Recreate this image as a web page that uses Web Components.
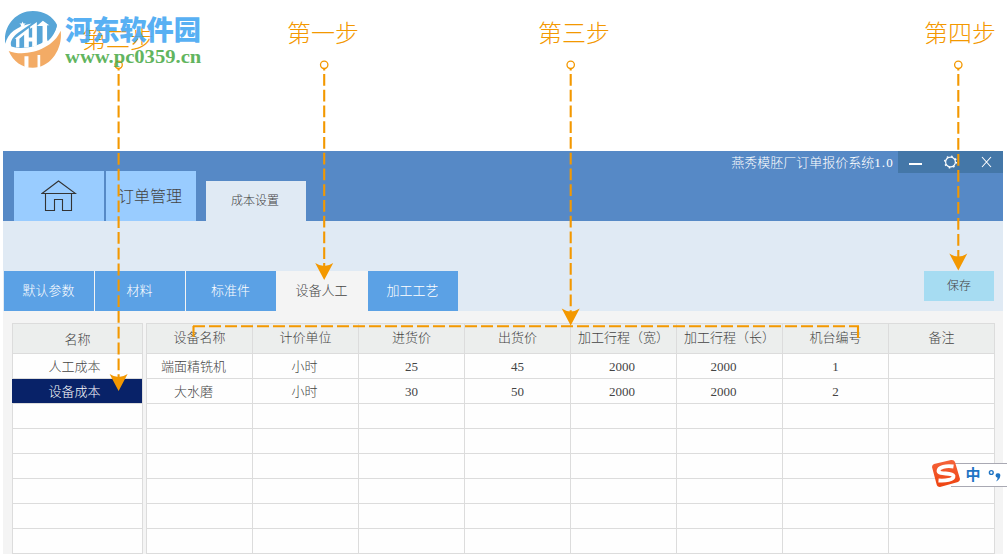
<!DOCTYPE html>
<html lang="zh-CN">
<head>
<meta charset="UTF-8">
<title>燕秀模胚厂订单报价系统</title>
<style>
    html, body {
        margin: 0;
        height: 100%;
        overflow: hidden;
        background: #fff;
    }
    body {
        font-family: "Liberation Serif", "Noto Sans CJK SC", serif;
        font-weight: 300;
        font-size: 13px;
        color: #444;
    }
</style>
</head>
<body>
<guide-page></guide-page>

<script>
class StepLabel extends HTMLElement {

    constructor() {
        super()
        this.shadow = this.attachShadow({ mode: 'open' })
    }

    connectedCallback() {
        this.shadow.innerHTML =
      /*html*/`
        <style>
            :host {
                display: block;
                width: 72px;
                font-size: 24px;
                line-height: 32px;
                color: #f39800;
                white-space: nowrap;
                text-align: center;
            }
        </style>
        <slot></slot>
      `
    }
}

class SiteLogo extends HTMLElement {

    constructor() {
        super()
        this.shadow = this.attachShadow({ mode: 'open' })
    }

    connectedCallback() {
        this.shadow.innerHTML =
      /*html*/`
        <style>
            :host {
                display: flex;
                align-items: flex-start;
                gap: 4px;
                opacity: 0.88;
            }
            svg {
                width: 57px;
                height: 57px;
                margin-top: 1px;
            }
            .name {
                font-family: "Noto Sans CJK SC", sans-serif;
                font-weight: 900;
                font-size: 27.2px;
                line-height: 32px;
                padding-top: 2px;
                color: #42a6f2;
                white-space: nowrap;
            }
            .url {
                font-family: "Liberation Serif", serif;
                font-weight: bold;
                font-size: 19px;
                line-height: 20px;
                padding-top: 3px;
                color: #4cab49;
                white-space: nowrap;
            }
            .url span {
                display: inline-block;
                transform-origin: 0 50%;
                transform: scaleX(1.085);
            }
        </style>
        <svg viewBox="14 33 170 170">
            <path d="M18 131C10 80 48 33 100 33C134 33 160 50 172 74C170 104 130 136 84 142C62 145 46 143 36 139C30 126 40 110 56 98L96 70C52 78 24 100 18 131Z" fill="#4099d2"/>
            <path d="M46 116L88 84V112H98V82L92 86V80L112 66V136L98 140V124H88V142H74V104L60 116V142H50V116Z" fill="#fff"/>
            <path d="M112 78L130 62L150 76H143V124L129 132V78Z" fill="#fff"/>
            <path d="M150 76C158 72 166 72 171 77C168 96 158 110 146 122L143 122V76Z" fill="#4099d2"/>
            <path d="M183 92C190 146 152 202 100 202C68 202 42 184 28 152C76 172 160 148 183 92Z" fill="#f2a050"/>
            <path d="M75 202V168H87V202ZM114 202V164H122V202Z" fill="#fff"/>
            <path d="M69 64L72 70L79 70L74 75L76 82L69 78L63 82L65 75L60 70L67 70Z" fill="#fff"/>
        </svg>
        <div>
            <div class="name">河东软件园</div>
            <div class="url"><span>www.pc0359.cn</span></div>
        </div>
      `
    }
}

class WindowControls extends HTMLElement {

    constructor() {
        super()
        this.shadow = this.attachShadow({ mode: 'open' })
    }

    connectedCallback() {
        this.shadow.innerHTML =
      /*html*/`
        <style>
            :host {
                display: flex;
                width: 105px;
                height: 22px;
                background: #4477a8;
            }
            svg {
                width: 35px;
                height: 22px;
                fill: none;
                stroke: #fff;
            }
        </style>
        <svg><path d="M11 13H24" stroke-width="2"/></svg>
        <svg>
            <circle cx="17.5" cy="11" r="4.9" stroke-width="1.2"/>
            <circle cx="17.5" cy="11" r="5.8" stroke-width="1.5" stroke-dasharray="1.6 2.955"/>
        </svg>
        <svg><path d="M14 6L23 16M23 6L14 16" stroke-width="1.1"/></svg>
      `
    }
}

class AppHeader extends HTMLElement {

    constructor() {
        super()
        this.shadow = this.attachShadow({ mode: 'open' })
    }

    connectedCallback() {
        this.shadow.innerHTML =
      /*html*/`
        <style>
            :host {
                display: flex;
                justify-content: space-between;
                height: 70px;
                background: #5689c6;
            }
            .tabs {
                display: flex;
                align-items: flex-end;
                padding-left: 11px;
            }
            .tab {
                box-sizing: border-box;
                display: flex;
                align-items: center;
                justify-content: center;
                width: 90px;
                height: 50px;
                margin-right: 2px;
                background: #99ccff;
                font-size: 16px;
            }
            .text {
                padding: 0 2px 2px 0;
            }
            .tab.current {
                width: 100px;
                height: 40px;
                margin-left: 8px;
                background: #e0eaf4;
                font-size: 12px;
            }
            .right {
                display: flex;
                align-items: flex-start;
                gap: 4px;
            }
            .title {
                line-height: 24px;
                color: #fff;
            }
            .num {
                letter-spacing: 1.2px;
            }
            svg {
                width: 36px;
                height: 32px;
                fill: none;
                stroke: #333;
                stroke-width: 1.1;
            }
        </style>
        <div class="tabs">
            <div class="tab">
                <svg><path d="M1 13.500L17.500 1L34.500 13.500ZM4.500 13.500V30.500H13.500V19.500H21.500V30.500H30.500V13.500"/></svg>
            </div>
            <div class="tab text">订单管理</div>
            <div class="tab text current">成本设置</div>
        </div>
        <div class="right">
            <div class="title">燕秀模胚厂订单报价系统<span class="num">1.0</span></div>
            <window-controls></window-controls>
        </div>
      `
    }
}

class AppToolbar extends HTMLElement {

    constructor() {
        super()
        this.shadow = this.attachShadow({ mode: 'open' })
    }

    connectedCallback() {
        this.shadow.innerHTML =
      /*html*/`
        <style>
            :host {
                display: flex;
                justify-content: space-between;
                height: 40px;
                padding: 50px 9px 0 1px;
                background: #e0eaf4;
            }
            .tabs {
                display: flex;
                gap: 1px;
                background: #f4f4f4;
            }
            .tab {
                box-sizing: border-box;
                width: 90px;
                padding-right: 1px;
                line-height: 39px;
                text-align: center;
                background: #5ba1e5;
                color: #fff;
            }
            .tab.current {
                background: #f4f4f4;
                color: #444;
            }
            .save {
                width: 70px;
                height: 30px;
                line-height: 31px;
                text-align: center;
                font-size: 12px;
                background: #a6dcf2;
            }
        </style>
        <div class="tabs">
            <div class="tab">默认参数</div>
            <div class="tab">材料</div>
            <div class="tab">标准件</div>
            <div class="tab current">设备人工</div>
            <div class="tab">加工工艺</div>
        </div>
        <div class="save">保存</div>
      `
    }
}

class DataGrid extends HTMLElement {

    constructor() {
        super()
        this.shadow = this.attachShadow({ mode: 'open' })
    }

    connectedCallback() {
        const columns = this.getAttribute('columns').split(',')
        const rows = this.getAttribute('rows').split(';').map(row => row.split(','))
        const shifts = (this.getAttribute('shifts') || '').split(',')
        const selected = Number(this.getAttribute('selected') || -1)
        // pad with blank rows down to the bottom of the window
        while (rows.length < 8) rows.push([])

        this.shadow.innerHTML =
      /*html*/`
        <style>
            :host {
                display: block;
                border-left: 1px solid #dcdcdc;
                border-top: 1px solid #dcdcdc;
                background: #fefefe;
            }
            .row {
                display: flex;
                height: 24px;
                border-bottom: 1px solid #dcdcdc;
            }
            .head {
                height: 29px;
                background: #eceeed;
            }
            .cell {
                box-sizing: border-box;
                flex: none;
                width: ${100 / columns.length}%;
                line-height: 26px;
                border-right: 1px solid #dcdcdc;
                text-align: center;
                white-space: nowrap;
            }
            .head .cell {
                line-height: var(--head-line, 28px);
            }
            .selected {
                margin-left: -1px;
                padding-left: 1px;
                background: #082268;
                color: #fff;
            }
        </style>
        <div class="row head">${columns.map(name => `<div class="cell">${name}</div>`).join('')}</div>
        ${rows.map((row, i) => `
        <div class="row ${i === selected ? 'selected' : ''}">
            ${columns.map((_, c) => `<div class="cell" style="padding-right:${shifts[c] || 0}px">${row[c] || ''}</div>`).join('')}
        </div>`).join('')}
      `
    }
}

class ImeBar extends HTMLElement {

    constructor() {
        super()
        this.shadow = this.attachShadow({ mode: 'open' })
    }

    connectedCallback() {
        this.shadow.innerHTML =
      /*html*/`
        <style>
            :host {
                display: flex;
                width: 76px;
                height: 30px;
            }
            svg {
                width: 76px;
                height: 30px;
            }
            text {
                font: bold 15px "Noto Sans CJK SC", sans-serif;
                fill: #1f74c4;
            }
        </style>
        <svg>
            <defs>
                <linearGradient id="red" x1="0" y1="0" x2="0" y2="1">
                    <stop offset="0" stop-color="#f5633a"/>
                    <stop offset="1" stop-color="#ee4310"/>
                </linearGradient>
            </defs>
            <path d="M20 4.500H76V27.500H20Z" fill="#fff"/>
            <path d="M20 4.500H76M20 27.500H76" stroke="#a9a9b3"/>
            <path d="M3 5L20 1Q23 0.500 24 3L29 20Q29 22 27 23L9 28Q6 28 5.500 25L1 8Q1 6 3 5Z" fill="url(#red)"/>
            <path d="M22.500 7.500C15 6.500 7.500 8 7.500 12C8 16 21 13 22.500 17C23 21 14 22 7.500 21.500" fill="none" stroke="#fff" stroke-width="3.8"/>
            <text x="34.500" y="21">中</text>
            <circle cx="60.300" cy="13.500" r="1.900" fill="none" stroke="#1f74c4" stroke-width="1.4"/>
            <path d="M64.500 16.500a2.400 2.400 0 1 1 4.700 .8q-.5 3.500-4.200 5.200q1.700-2 1.600-3.700q-1.900-.3-2.100-2.300Z" fill="#1f74c4"/>
        </svg>
      `
    }
}

class StepArrows extends HTMLElement {

    constructor() {
        super()
        this.shadow = this.attachShadow({ mode: 'open' })
    }

    arrow(x, tip, gap) {
        return `
            <circle cx="${x}" cy="64.800" r="3.700" fill="none" stroke-width="1.3"/>
            <path d="M${x} 68.500V70.500"/>
            <path d="M${x} 74V${tip - 12}" stroke-dasharray="11.8 ${gap}"/>
            <path d="M${x} ${tip}L${x - 9} ${tip - 17}Q${x} ${tip - 11} ${x + 9} ${tip - 17}Z" fill="#f39800" stroke="none"/>
        `
    }

    connectedCallback() {
        this.shadow.innerHTML =
      /*html*/`
        <style>
            :host {
                display: block;
                pointer-events: none;
            }
            svg {
                display: block;
                fill: none;
                stroke: #f39800;
                stroke-width: 2.1;
            }
        </style>
        <svg width="1007" height="554">
            ${this.arrow(118.6, 391, 4)}
            ${this.arrow(324.2, 280, 3.95)}
            ${this.arrow(570.7, 325.5, 3.95)}
            ${this.arrow(958.3, 270.5, 4.2)}
            <path d="M193.500 337V326M858 326V338"/>
            <path d="M193 326.200H859" stroke-dasharray="12 4"/>
        </svg>
      `
    }
}

class GuidePage extends HTMLElement {

    constructor() {
        super()
        this.shadow = this.attachShadow({ mode: 'open' })
    }

    connectedCallback() {
        this.shadow.innerHTML =
      /*html*/`
        <style>
            :host {
                display: block;
                position: relative;
                height: 554px;
                overflow: hidden;
            }
            .steps {
                box-sizing: border-box;
                display: flex;
                height: 151px;
                padding: 18px 0 0 82px;
            }
            .steps :nth-child(1) { margin-top: 6px; }
            .steps :nth-child(2) { margin-left: 133px; }
            .steps :nth-child(3) { margin-left: 179px; }
            .steps :nth-child(4) { margin-left: 314px; }
            .app {
                width: 1000px;
                margin-left: 3px;
            }
            .content {
                display: flex;
                gap: 3px;
                height: 243px;
                padding: 12px 8px 0 9px;
                box-sizing: border-box;
                background: #f4f4f4;
            }
            .names {
                flex: none;
                width: 130px;
                --head-line: 31px;
            }
            .names, .machines {
                height: 230px;
            }
            .machines {
                flex: none;
                width: 848px;
            }
            /* these float over the window */
            site-logo, step-arrows, ime-bar {
                position: absolute;
            }
            site-logo { left: 4px; top: 10px; }
            step-arrows { left: 0; top: 0; }
            ime-bar { left: 931px; top: 459px; }
        </style>
        <div class="steps">
            <step-label>第二步</step-label>
            <step-label>第一步</step-label>
            <step-label>第三步</step-label>
            <step-label>第四步</step-label>
        </div>
        <div class="app">
            <app-header></app-header>
            <app-toolbar></app-toolbar>
            <div class="content">
                <data-grid class="names" columns="名称" rows="人工成本;设备成本" shifts="6" selected="1"></data-grid>
                <data-grid class="machines"
                    columns="设备名称,计价单位,进货价,出货价,加工行程（宽）,加工行程（长）,机台编号,备注"
                    rows="端面精铣机,小时,25,45,2000,2000,1;大水磨,小时,30,50,2000,2000,2"
                    shifts="12,2,0,0,3,12,0,0"></data-grid>
            </div>
        </div>
        <step-arrows></step-arrows>
        <site-logo></site-logo>
        <ime-bar></ime-bar>
      `
    }
}

customElements.define('step-label', StepLabel);
customElements.define('site-logo', SiteLogo);
customElements.define('window-controls', WindowControls);
customElements.define('app-header', AppHeader);
customElements.define('app-toolbar', AppToolbar);
customElements.define('data-grid', DataGrid);
customElements.define('ime-bar', ImeBar);
customElements.define('step-arrows', StepArrows);
customElements.define('guide-page', GuidePage);
</script>
</body>
</html>
